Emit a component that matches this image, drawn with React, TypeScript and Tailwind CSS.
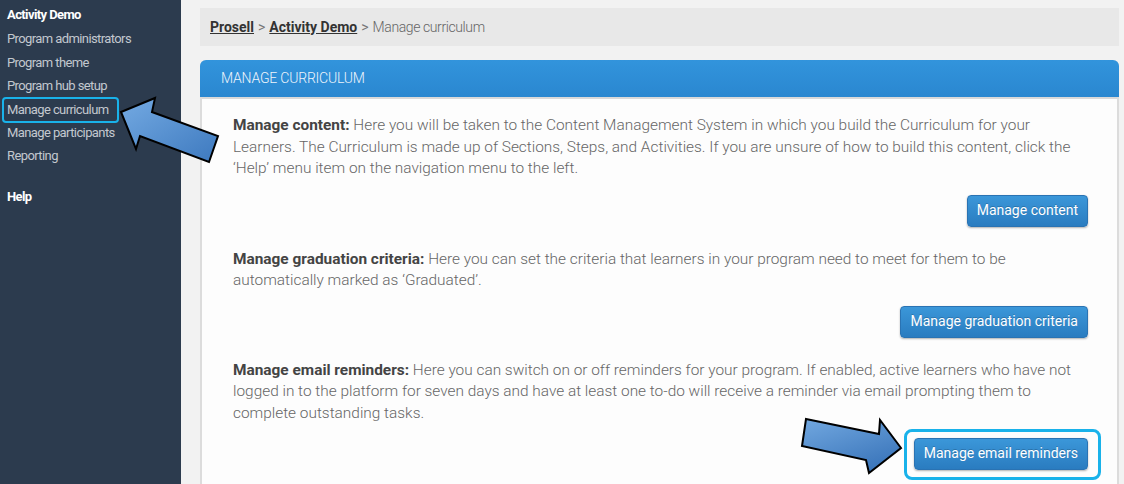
import React from 'react'

const sideItems = [
  'Program administrators',
  'Program theme',
  'Program hub setup',
  'Manage curriculum',
  'Manage participants',
  'Reporting',
]

function Btn({ children }: { children: React.ReactNode }) {
  return (
    <button className="h-[32px] px-[9px] rounded-[4px] border border-[#2a73b3] bg-gradient-to-b from-[#3b97d9] to-[#2a7cc0] text-white text-[14px] font-normal shadow-[0_1px_2px_rgba(0,0,0,0.3)] [text-shadow:0_-1px_0_rgba(0,0,0,0.2)]">
      {children}
    </button>
  )
}

function Arrows() {
  return (
    <svg className="absolute inset-0 pointer-events-none" width="1124" height="484" viewBox="0 0 1124 484">
      <defs>
        <linearGradient id="ga" x1="0" y1="0" x2="1" y2="1">
          <stop offset="0" stopColor="#74aae2" />
          <stop offset="1" stopColor="#3d79bf" />
        </linearGradient>
        <linearGradient id="gb" x1="0" y1="0" x2="0.6" y2="1">
          <stop offset="0" stopColor="#72a8e0" />
          <stop offset="1" stopColor="#3b76bb" />
        </linearGradient>
      </defs>
      <polygon
        points="121,112 155,98 152,112 218,136 209,162 140,136 136,149"
        fill="url(#ga)"
        stroke="#000"
        strokeWidth="2"
        strokeLinejoin="miter"
      />
      <polygon
        points="806,419 879,434 880,420 901,448 869,473 866,460 802,446"
        fill="url(#gb)"
        stroke="#000"
        strokeWidth="2"
        strokeLinejoin="miter"
      />
    </svg>
  )
}

export default function App() {
  return (
    <div className="relative w-[1124px] h-[484px] overflow-hidden flex bg-[#f2f2f2] font-['Roboto',sans-serif]">
      {/* sidebar */}
      <aside className="w-[181px] shrink-0 bg-[#2c3b4e] pt-[3px] pl-[7px] text-[13px] leading-[23.4px]">
        <div className="font-bold text-white tracking-[-0.6px]">Activity Demo</div>
        <ul className="mt-[1px]">
          {sideItems.map(item => (
            <li key={item} className="relative text-[#c3c8ce] tracking-[-0.6px]">
              {item}
              {item === 'Manage curriculum' && (
                <span className="absolute left-[-5px] top-[-1px] w-[117px] h-[26px] border-[2.5px] border-[#19b2ea] rounded-[4px]" />
              )}
            </li>
          ))}
        </ul>
        <div className="mt-[17px] font-bold text-white tracking-[-0.6px]">Help</div>
      </aside>

      {/* main */}
      <main className="flex-1 pl-[19px] pr-[5px] pt-[8px]">
        <div className="h-[38px] bg-[#e8e8e8] flex items-center px-[10px] text-[14px] text-[#666]">
          <a className="font-bold underline text-[#333]">Prosell</a>
          <span className="mx-[4px] text-[#777]">&gt;</span>
          <a className="font-bold underline text-[#333]">Activity Demo</a>
          <span className="mx-[4px] text-[#777]">&gt;</span>
          <span className="font-light tracking-[-0.4px]">Manage curriculum</span>
        </div>

        <section className="mt-[14px] rounded-t-[6px] border-x-2 border-[#dcdcdc] bg-[#fdfdfd] h-[500px]">
          <div className="-mx-[2px] h-[37px] rounded-t-[6px] bg-gradient-to-b from-[#3294dc] to-[#2a87d0] flex items-center px-[21px] text-[14px] font-light tracking-[-0.2px] text-[#eef4fb] uppercase">
            Manage curriculum
          </div>
          <div className="h-[2px] bg-[#d9d9d9]" />

          <div className="pl-[31px] pr-[29px] pt-[16px] text-[15.4px] leading-[21.5px] text-[#666] font-light">
            <p className="whitespace-nowrap">
              <b className="font-bold text-[#444]">Manage content:</b> Here you will be taken to the Content Management System in which you build the Curriculum for your
              <br />
              Learners. The Curriculum is made up of Sections, Steps, and Activities. If you are unsure of how to build this content, click the
              <br />
              ‘Help’ menu item on the navigation menu to the left.
            </p>
            <div className="flex justify-end mt-[15px]">
              <Btn>Manage content</Btn>
            </div>

            <p className="whitespace-nowrap mt-[22px]">
              <b className="font-bold text-[#444]">Manage graduation criteria:</b> Here you can set the criteria that learners in your program need to meet for them to be
              <br />
              automatically marked as ‘Graduated’.
            </p>
            <div className="flex justify-end mt-[14px]">
              <Btn>Manage graduation criteria</Btn>
            </div>

            <p className="whitespace-nowrap mt-[22px]">
              <b className="font-bold text-[#444]">Manage email reminders:</b> Here you can switch on or off reminders for your program. If enabled, active learners who have not
              <br />
              logged in to the platform for seven days and have at least one to-do will receive a reminder via email prompting them to
              <br />
              complete outstanding tasks.
            </p>
            <div className="flex justify-end mt-[14px]">
              <div className="relative">
                <Btn>Manage email reminders</Btn>
                <span className="absolute left-[-10px] right-[-13px] top-[-9px] bottom-[-10px] border-[3px] border-[#19b2ea] rounded-[8px]" />
              </div>
            </div>
          </div>
        </section>
      </main>

      <Arrows />
    </div>
  )
}
